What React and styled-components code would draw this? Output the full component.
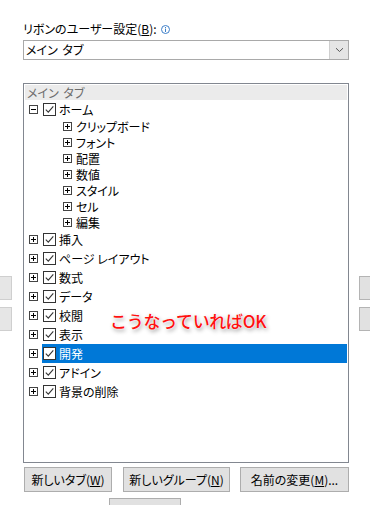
import React from 'react';
import styled, { createGlobalStyle, css } from 'styled-components';

const GlobalStyle = createGlobalStyle`
  html, body { margin: 0; padding: 0; background: #fff; }
  body {
    font-family: "Noto Sans CJK JP", "Noto Sans", sans-serif;
    font-size: 12px; color: #000;
    font-feature-settings: "palt";
    overflow: hidden;
  }
`;

const Page = styled.div`
  display: flex; width: 370px; height: 505px; overflow: hidden;
`;
const SideCol = styled.div`
  width: ${p => p.w}px; flex: none;
  display: flex; flex-direction: column; gap: 7px;
  padding-top: 276px;
`;
const SideButton = styled.div`
  height: 24px; box-sizing: border-box; flex: none;
  background: #e6e6e6; border: 1px solid #cfcfcf;
  ${p => p.side === 'left' ? css`border-left: none;` : css`border-right: none; background: #e1e1e1; border-color: #b4b4b4;`}
`;
const Center = styled.div`
  width: 326px; flex: none; margin: 0 10px 0 11px;
  display: flex; flex-direction: column;
  > * { flex: none; }
`;
const Label = styled.div`
  margin-top: 21px; height: 16px; line-height: 16px;
  display: flex; align-items: center; gap: 4px;
  u { text-decoration: underline; }
`;
const Dropdown = styled.div`
  margin-top: 3px; height: 20px; box-sizing: border-box;
  border: 1px solid #a9a9a9; display: flex; align-items: stretch;
`;
const DropText = styled.div`
  flex: 1; padding-left: 2px; line-height: 18px; word-spacing: 2px;
`;
const DropArrow = styled.div`
  width: 18px; background: #e5e5e5; border-left: 1px solid #cfcfcf;
  display: flex; align-items: center; justify-content: center;
`;
const TreeBox = styled.div`
  position: relative;
  margin-top: 23px; height: 380px; box-sizing: border-box;
  border: 1px solid #828790; padding: 1px;
  display: flex; flex-direction: column;
`;
const TreeHeader = styled.div`
  height: 15px; line-height: 15px; background: #ebebeb; color: #6d6d6d;
  padding-left: 2px; flex: none; word-spacing: 2px;
`;
const Row = styled.div`
  height: ${p => p.h}px; display: flex; align-items: center;
  padding-left: ${p => p.indent}px; flex: none;
`;
const Item = styled.div`
  flex: 1; align-self: stretch; display: flex; align-items: center; gap: 3px;
  margin-left: ${p => p.gap}px; padding-left: 1px;
  ${p => p.selected && css`background: #0078d7; color: #fff;`}
`;
const Note = styled.div`
  position: absolute; left: 86px; top: 224px;
  font-size: 17px; font-weight: 500; color: #ff1010; white-space: nowrap;
  font-feature-settings: normal; letter-spacing: -0.3px;
  text-shadow: 0 0 1px #fff, 0 0 2px #fff, 1px 2px 4px rgba(0,0,0,0.45);
`;
const ButtonRow = styled.div`
  margin-top: 4px; margin-left: 1px; display: flex; gap: 11px;
`;
const Button = styled.div`
  width: ${p => p.w}px; height: 25px; box-sizing: border-box; flex: none;
  background: #e1e1e1; border: 1px solid #adadad;
  display: flex; align-items: center; justify-content: center;
  margin-left: ${p => p.ml || 0}px; white-space: nowrap;
  u { text-decoration: underline; }
`;
const ResetRow = styled.div`
  margin-top: 6px; display: flex; align-items: center; gap: 3px;
  padding-left: 12px; height: 24px; white-space: nowrap;
`;
const ResetLabel = styled.div`
  letter-spacing: -0.4px;
`;
const ResetButton = styled.div`
  width: 72px; height: 24px; box-sizing: border-box;
  background: #e1e1e1; border: 1px solid #adadad;
  display: flex; align-items: center; justify-content: center; gap: 4px;
  u { text-decoration: underline; }
`;

const InfoIcon = () => (
  <svg width="9" height="9" viewBox="0 0 9 9" style={{ flex: 'none' }}>
    <circle cx="4.5" cy="4.5" r="4" fill="none" stroke="#3c7fc8" strokeWidth="1" />
    <rect x="4" y="2" width="1" height="1" fill="#3c7fc8" />
    <rect x="4" y="3.6" width="1" height="3.4" fill="#3c7fc8" />
  </svg>
);

const Chevron = () => (
  <svg width="9" height="6" viewBox="0 0 9 6">
    <path d="M1 1.2 L4.5 4.5 L8 1.2" fill="none" stroke="#555" strokeWidth="1" />
  </svg>
);

const Expander = ({ open }) => (
  <svg width="9" height="9" viewBox="0 0 9 9" style={{ flex: 'none' }}>
    <rect x="0.5" y="0.5" width="8" height="8" fill="#fff" stroke="#444" />
    <line x1="2" y1="4.5" x2="7" y2="4.5" stroke="#000" />
    {!open && <line x1="4.5" y1="2" x2="4.5" y2="7" stroke="#000" />}
  </svg>
);

const Check = () => (
  <svg width="13" height="13" viewBox="0 0 13 13" style={{ flex: 'none' }}>
    <rect x="0.5" y="0.5" width="12" height="12" fill="#fff" stroke="#333" />
    <path d="M2.8 6.6 L5.3 9.2 L10.3 3.3" fill="none" stroke="#333" strokeWidth="1.1" />
  </svg>
);

const groups = ['クリップボード', 'フォント', '配置', '数値', 'スタイル', 'セル', '編集'];
const tabs = ['挿入', 'ページ レイアウト', '数式', 'データ', '校閲', '表示', '開発', 'アドイン', '背景の削除'];

export default function App() {
  return (
    <>
      <GlobalStyle />
      <Page>
        <SideCol w={12}>
          <SideButton side="left" />
          <SideButton side="left" />
        </SideCol>
        <Center>
          <Label>
            <span>リボンのユーザー設定(<u>B</u>):</span>
            <InfoIcon />
          </Label>
          <Dropdown>
            <DropText>メイン タブ</DropText>
            <DropArrow><Chevron /></DropArrow>
          </Dropdown>
          <TreeBox>
            <TreeHeader>メイン タブ</TreeHeader>
            <Row h={18} indent={4}>
              <Expander open />
              <Item gap={4}><Check />ホーム</Item>
            </Row>
            {groups.map(g => (
              <Row key={g} h={16} indent={38}>
                <Expander />
                <Item gap={3}>{g}</Item>
              </Row>
            ))}
            {tabs.map(t => (
              <Row key={t} h={19} indent={4}>
                <Expander />
                <Item gap={4} selected={t === '開発'}><Check />{t}</Item>
              </Row>
            ))}
            <Note>こうなっていればOK</Note>
          </TreeBox>
          <ButtonRow>
            <Button w={88}>新しいタブ(<u>W</u>)</Button>
            <Button w={107}>新しいグループ(<u>N</u>)</Button>
            <Button w={109} ml={-1}>名前の変更(<u>M</u>)...</Button>
          </ButtonRow>
          <ResetRow>
            <ResetLabel>ユーザー設定:</ResetLabel>
            <ResetButton>リセット(<u>E</u>) ▾</ResetButton>
            <InfoIcon />
          </ResetRow>
        </Center>
        <SideCol w={11}>
          <SideButton side="right" />
          <SideButton side="right" />
        </SideCol>
      </Page>
    </>
  );
}
